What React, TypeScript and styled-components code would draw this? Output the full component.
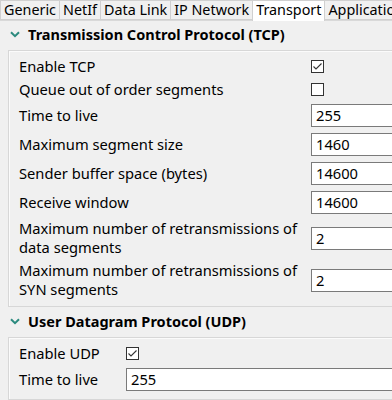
import React from "react";
import styled, { createGlobalStyle } from "styled-components";

const GlobalStyle = createGlobalStyle`
  *, *::before, *::after {
    box-sizing: border-box;
  }
  html, body {
    margin: 0;
    padding: 0;
    background: #f0f0f0;
    overflow: hidden;
  }
  body {
    font-family: "Noto Sans", "Open Sans", sans-serif;
    font-size: 14.7px;
    color: #000;
  }
`;

const Page = styled.div`
  width: 392px;
  height: 400px;
  overflow: hidden;
  background: #f0f0f0;
`;

const TabBar = styled.div`
  display: flex;
  height: 21px;
  border-bottom: 1px solid #d9d9d9;
  white-space: nowrap;
`;

const Tab = styled.div<{ $active?: boolean }>`
  flex: none;
  height: ${(p) => (p.$active ? "21px" : "20px")};
  padding: 0 3px;
  font-size: 14.35px;
  line-height: 18px;
  background: ${(p) => (p.$active ? "#ffffff" : "#f0f0f0")};
  border: 1px solid #d0d0d0;
  border-bottom: ${(p) => (p.$active ? "none" : "1px solid #d0d0d0")};
  margin-right: -1px;
`;

const Section = styled.section`
  display: flex;
  flex-direction: column;
  & + & {
    margin-top: 1px;
  }
`;

const SectionHeader = styled.div`
  display: flex;
  align-items: center;
  gap: 8px;
  height: 29px;
  padding: 0 0 3px 10px;
  font-size: 14.5px;
  font-weight: 700;
`;

const Chevron = styled.svg`
  width: 10px;
  height: 7px;
  flex: none;
`;

const Panel = styled.div<{ $labelWidth: string }>`
  display: grid;
  grid-template-columns: ${(p) => p.$labelWidth} 1fr;
  row-gap: 4px;
  align-items: center;
  margin-left: 8px;
  margin-right: -10px;
  padding: 6px 0 7px 10px;
  border: 1px solid #d7d7d7;
  box-shadow: inset 1px 1px 0 #fbfbfb;
`;

const Label = styled.div`
  line-height: 19px;
  padding-right: 8px;
`;

const Field = styled.div<{ $tall?: boolean }>`
  display: flex;
  align-items: center;
  min-height: ${(p) => (p.$tall ? "25px" : "19px")};
`;

const Box = styled.div`
  width: 13px;
  height: 13px;
  border: 1px solid #333;
  background: #fff;
  display: flex;
  align-items: center;
  justify-content: center;
`;

const Input = styled.div`
  width: 100%;
  height: 23px;
  padding: 0 4px;
  line-height: 21px;
  border: 1px solid #7a7a7a;
  background: #fff;
`;

const ChevronIcon = () => (
  <Chevron viewBox="0 0 10 7">
    <path d="M1 1.2 L5 5.2 L9 1.2" fill="none" stroke="#2b8a7e" strokeWidth="2" />
  </Chevron>
);

const Checkbox = ({ checked }: { checked?: boolean }) => (
  <Box>
    {checked && (
      <svg width="11" height="9" viewBox="0 0 11 9">
        <path d="M1.5 4.5 L4 7 L9.5 1.5" fill="none" stroke="#333" strokeWidth="1.1" />
      </svg>
    )}
  </Box>
);

type Row = { label: string; value?: string; check?: boolean };

const tcpRows: Row[] = [
  { label: "Enable TCP", check: true },
  { label: "Queue out of order segments", check: false },
  { label: "Time to live", value: "255" },
  { label: "Maximum segment size", value: "1460" },
  { label: "Sender buffer space (bytes)", value: "14600" },
  { label: "Receive window", value: "14600" },
  { label: "Maximum number of retransmissions of data segments", value: "2" },
  { label: "Maximum number of retransmissions of SYN segments", value: "2" },
];

const udpRows: Row[] = [
  { label: "Enable UDP", check: true },
  { label: "Time to live", value: "255" },
];

const renderRows = (rows: Row[]) =>
  rows.map((r) => (
    <React.Fragment key={r.label}>
      <Label>{r.label}</Label>
      <Field $tall={r.value !== undefined}>
        {r.value !== undefined ? <Input>{r.value}</Input> : <Checkbox checked={r.check} />}
      </Field>
    </React.Fragment>
  ));

const tabs = ["Generic", "NetIf", "Data Link", "IP Network", "Transport", "Application"];

export default function App() {
  return (
    <Page>
      <GlobalStyle />
      <TabBar>
        {tabs.map((t) => (
          <Tab key={t} $active={t === "Transport"}>
            {t}
          </Tab>
        ))}
      </TabBar>
      <Section>
        <SectionHeader>
          <ChevronIcon />
          Transmission Control Protocol (TCP)
        </SectionHeader>
        <Panel $labelWidth="292px">{renderRows(tcpRows)}</Panel>
      </Section>
      <Section>
        <SectionHeader>
          <ChevronIcon />
          User Datagram Protocol (UDP)
        </SectionHeader>
        <Panel $labelWidth="107px">{renderRows(udpRows)}</Panel>
      </Section>
    </Page>
  );
}
